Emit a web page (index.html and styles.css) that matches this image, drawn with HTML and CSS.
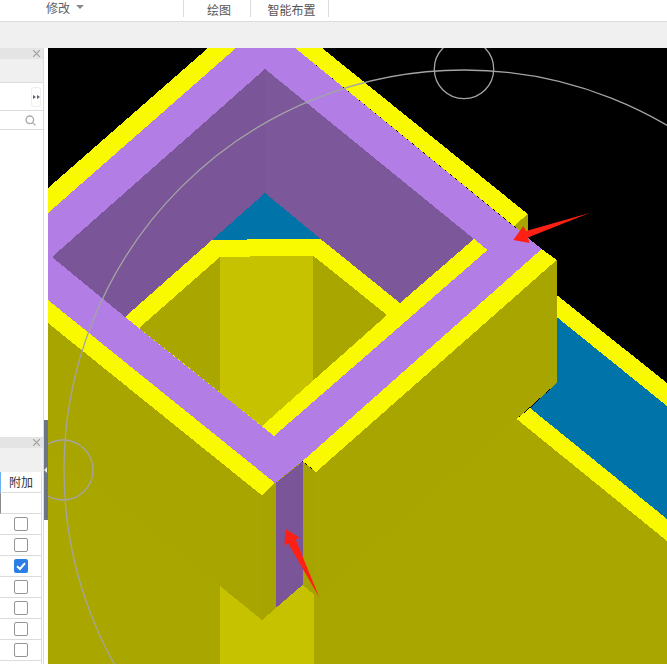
FILE: index.html
```html
<!DOCTYPE html>
<html lang="zh-CN">
<head>
<meta charset="utf-8">
<title>绘图</title>
<link rel="stylesheet" href="styles.css">
</head>
<body>
<div class="app">
  <header class="toolbar">
    <div class="tool tool-edit"><span>修改</span><i class="caret"></i></div>
    <div class="tool tool-draw"><span>绘图</span></div>
    <div class="tool tool-smart"><span>智能布置</span></div>
  </header>
  <div class="ribbon"></div>
  <main class="workspace">
    <aside class="sidebar">
      <div class="side-inner">
        <section class="panel panel-top">
          <div class="panel-head">
            <svg class="close" viewBox="0 0 7 7"><path d="M0 0L7 7M7 0L0 7"/></svg>
          </div>
          <div class="panel-band band-top"></div>
          <div class="row-tabs">
            <div class="more"><i class="tri"></i><i class="tri"></i></div>
          </div>
          <div class="row-search">
            <svg class="search" viewBox="0 0 11 11"><circle cx="4.8" cy="4.8" r="3.8"/><path d="M7.6 7.6L10.4 10.4"/></svg>
          </div>
          <div class="list"></div>
        </section>
        <section class="panel panel-bottom">
          <div class="panel-head">
            <svg class="close" viewBox="0 0 7 7"><path d="M0 0L7 7M7 0L0 7"/></svg>
          </div>
          <div class="panel-band band-bottom"></div>
          <div class="table">
            <div class="cell cell-head">附加</div>
            <div class="cell cell-blank"></div>
            <div class="cell"><i class="check"></i></div>
            <div class="cell"><i class="check"></i></div>
            <div class="cell"><i class="check checked"><svg viewBox="0 0 14 14"><path d="M3 7.2L6 10L11 4.2"/></svg></i></div>
            <div class="cell"><i class="check"></i></div>
            <div class="cell"><i class="check"></i></div>
            <div class="cell"><i class="check"></i></div>
            <div class="cell"><i class="check"></i></div>
            <div class="cell cell-end"></div>
          </div>
        </section>
      </div>
      <div class="handle"><i class="handle-tri"></i></div>
    </aside>
    <svg class="canvas" viewBox="48 48 619 616" preserveAspectRatio="none" shape-rendering="crispEdges">
      <rect class="f-black" x="48" y="48" width="619" height="616"/>
      <!-- floor -->
      <polygon class="f-floor" points="48,300 316,472 556.7,260 556.7,383 516.7,419 667,541 667,664 48,664"/>
      <polygon class="f-light" points="220,586 262,620 302.5,585 313.5,594 313.5,664 220,664"/>
      <!-- back strips -->
      <polygon class="f-yellow" points="556.7,295 667,383 667,406 556.7,317"/>
      <polygon class="f-blue" points="556.7,317 667,406 667,519 530,408 556.7,383"/>
      <polygon class="f-yellow" points="530,408 667,519 667,541 516.7,419"/>
      <!-- walls -->
      <polygon class="f-wall" points="48,323 262,495.5 262,620 220,586 48,449"/>
      <polygon class="f-wall" points="316,472 556.7,260 556.7,383 516.7,419 316,596"/>
      <polygon class="f-strip" points="262,495.5 275.7,483.5 275.7,608 262,620"/>
      <polygon class="f-strip" points="302.5,461.5 316,472 316,596 302.5,585"/>
      <polygon class="f-dark" points="275.7,483 302.5,461.5 302.5,585 275.7,608"/>
      <!-- top rim -->
      <polygon class="f-wall" points="527.7,214 514,226 527.7,237.6"/>
      <polygon class="f-yellow" points="48,188 208,48 322,48 527.7,214 514,226 295,48 236,48 48,213"/>
      <polygon class="f-purple" points="236,48 295,48 541.7,249 302.7,461 275,483 48,300 48,213"/>
      <polygon class="f-yellow" points="48,300 275,483 262,495.5 48,323"/>
      <polygon class="f-yellow" points="302.7,461 541.7,249 556.7,260 316,472"/>
      <!-- recess -->
      <polygon class="f-dark" points="265,69 474,239 400,303 320,238.5 265,193 212,240 125,317 52,257"/>
      <polygon class="f-dark2" points="265,69 474,239 400,303 320,238.5 265,193"/>
      <polygon class="f-blue" points="212,240 265,193 320,238.5"/>
      <polygon class="f-yellow" points="125,317 212,240 320,238.5 400,303 474,239 487.5,250 274,436"/>
      <polygon class="f-floor" points="139,328 220,257 313,255.5 387,315 262,426"/>
      <polygon class="f-light" points="220,257 313,255.5 313,380.7 262,426 220,393"/>
      <!-- guide circles -->
      <g class="guides" shape-rendering="auto">
        <circle cx="464" cy="470" r="400"/>
        <circle cx="464" cy="69" r="29.7"/>
        <circle cx="63" cy="470" r="30"/>
      </g>
      <!-- arrows -->
      <g shape-rendering="auto">
        <polygon class="f-red" points="513.3,240 523.3,226 526,231 589.5,213 528,237.5 529.5,243"/>
        <polygon class="f-red" points="285.7,529 300,538 295.7,539.5 319.5,598 288,543 284.3,546"/>
      </g>
    </svg>
  </main>
</div>
</body>
</html>
```

FILE: styles.css
```css
* { box-sizing: border-box; }
html, body { margin: 0; padding: 0; background: #fff; }
body {
  width: 667px;
  height: 664px;
  overflow: hidden;
  font-family: "Noto Sans CJK SC", "Liberation Sans", sans-serif;
  font-size: 12px;
}
.app { display: flex; flex-direction: column; width: 667px; height: 664px; }

.toolbar {
  height: 22px;
  flex: none;
  display: flex;
  background: #fff;
  border-bottom: 1px solid #dcdcdc;
  color: #555;
}
.tool { height: 17px; display: flex; align-items: center; justify-content: center; line-height: 17px; }
.tool-edit { width: 183px; justify-content: flex-start; padding: 0 0 3px 46px; color: #5c6168; }
.tool-draw { width: 67px; border-left: 1px solid #dcdcdc; padding: 1px 0 0 4px; }
.tool-smart { width: 79px; border-left: 1px solid #dcdcdc; border-right: 1px solid #dcdcdc; padding: 1px 0 0 4px; }
.caret {
  margin-left: 6px;
  width: 0;
  height: 0;
  border-left: 4px solid transparent;
  border-right: 4px solid transparent;
  border-top: 4px solid #888;
}

.ribbon { height: 26px; flex: none; background: #f0f0f0; }

.workspace { display: flex; flex: 1; min-height: 0; }
.canvas { display: block; width: 619px; height: 616px; flex: none; }

.sidebar { position: relative; width: 48px; flex: none; background: #fff; }
.side-inner {
  width: 44px;
  height: 100%;
  display: flex;
  flex-direction: column;
  border-right: 1px solid #dcdcdc;
  overflow: hidden;
}
.panel { display: flex; flex-direction: column; }
.panel-top { flex: 1; min-height: 0; }
.panel-bottom { flex: none; }
.panel-head {
  height: 11px;
  flex: none;
  display: flex;
  justify-content: flex-end;
  align-items: center;
  padding-right: 3px;
  background: #e4e4e4;
}
.close { width: 7px; height: 7px; }
.close path { fill: none; stroke: #a0a0a0; stroke-width: 1.2; }
.panel-band { flex: none; background: #f0f0f0; }
.band-top { height: 24px; border-bottom: 1px solid #dcdcdc; }
.band-bottom { height: 24px; }
.row-tabs {
  height: 28px;
  flex: none;
  display: flex;
  justify-content: flex-end;
  align-items: center;
  padding-right: 2px;
  border-bottom: 1px solid #dcdcdc;
}
.more {
  width: 10px;
  height: 20px;
  display: flex;
  align-items: center;
  justify-content: center;
  gap: 1px;
  border: 1px solid #eeeeee;
  border-radius: 3px;
  background: #fff;
}
.tri {
  flex: none;
  width: 0;
  height: 0;
  border-top: 2.5px solid transparent;
  border-bottom: 2.5px solid transparent;
  border-left: 3px solid #5e6672;
}
.row-search {
  height: 19px;
  flex: none;
  display: flex;
  justify-content: flex-end;
  align-items: center;
  padding-right: 7px;
  border-bottom: 1px solid #dcdcdc;
}
.search { width: 11px; height: 11px; }
.search circle, .search path { fill: none; stroke: #a8a8a8; stroke-width: 1.3; }
.list { flex: 1; min-height: 0; background: #fff; }

.table {
  width: 42px;
  flex: none;
  display: flex;
  flex-direction: column;
  border-right: 1px solid #dcdcdc;
}
.cell {
  height: 21px;
  flex: none;
  display: flex;
  align-items: center;
  justify-content: center;
  border-bottom: 1px solid #dcdcdc;
  background: #fff;
}
.cell-end { height: 3px; border-bottom: 0; }
.cell-head { color: #333; border-left: 1px solid #6db3f2; line-height: 20px; }
.cell-blank { border-left: 1px solid #8a8a8a; }
.check {
  display: block;
  width: 14px;
  height: 14px;
  border: 1px solid #959595;
  border-radius: 2px;
  background: #fff;
}
.checked { border: 0; background: #2b7ee3; }
.checked svg { display: block; width: 14px; height: 14px; }
.checked path { fill: none; stroke: #fff; stroke-width: 2; }

.handle {
  position: absolute;
  left: 44px;
  top: 372px;
  width: 4px;
  height: 100px;
  display: flex;
  align-items: center;
  background: #6b7583;
}
.handle-tri {
  width: 0;
  height: 0;
  border-top: 3px solid transparent;
  border-bottom: 3px solid transparent;
  border-right: 3px solid #e8e8e8;
}

.f-black { fill: #000; }
.f-floor { fill: #aaa600; }
.f-wall { fill: #a9a500; }
.f-strip { fill: #a7a300; }
.f-light { fill: #c6c200; }
.f-yellow { fill: #f9f900; }
.f-blue { fill: #0074a8; }
.f-purple { fill: #b27ee6; }
.f-dark { fill: #7a5699; }
.f-dark2 { fill: #7c589b; }
.f-red { fill: #ff2015; }
.guides circle { fill: none; stroke: #a4a4a4; stroke-width: 1.3; }
```
